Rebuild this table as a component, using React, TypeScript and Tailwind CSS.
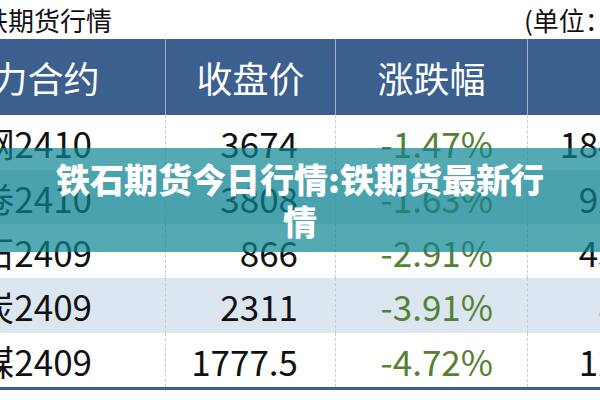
import React from "react";

const rows = [
  { code: "螺纹钢2410", price: "3674", chg: "-1.47%", vol: "184567", bg: "bg-white" },
  { code: "热卷2410", price: "3808", chg: "-1.63%", vol: "92345", bg: "bg-[#dce6f1]" },
  { code: "铁矿石2409", price: "866", chg: "-2.91%", vol: "45678", bg: "bg-white" },
  { code: "焦炭2409", price: "2311", chg: "-3.91%", vol: "8765", bg: "bg-[#dce6f1]" },
  { code: "焦煤2409", price: "1777.5", chg: "-4.72%", vol: "12345", bg: "bg-white" },
];

const heights = ["h-[55px]", "h-[54px]", "h-[54px]", "h-[55px]", "h-[54px]"];

export default function App() {
  const font = { fontFamily: '"Noto Sans CJK SC", "Noto Sans", sans-serif' };
  return (
    <div className="relative w-[600px] h-[400px] overflow-hidden bg-white" style={font}>
      {/* title row */}
      <div className="h-[39px] flex items-center justify-between">
        <div className="ml-[-18px] text-[26px] leading-none text-[#111]">铁期货行情</div>
        <div className="w-[76px] whitespace-nowrap text-[26px] leading-none text-[#111]">(单位：元/吨)</div>
      </div>

      {/* table */}
      <div className="ml-[-110px] w-[837px]">
        <div className="grid grid-cols-[275px_170px_192px_200px] h-[76px] bg-[#3b5f8e] text-white text-[36px] leading-none">
          <div className="flex items-center justify-center">主力合约</div>
          <div className="flex items-center justify-center border-l border-[#9fb4cf]">收盘价</div>
          <div className="flex items-center justify-center border-l border-[#9fb4cf]">涨跌幅</div>
          <div className="flex items-center pl-[92px] border-l border-[#9fb4cf] whitespace-nowrap">持仓量</div>
        </div>
        {rows.map((r, i) => (
          <div
            key={r.code}
            className={`grid grid-cols-[275px_170px_192px_200px] ${heights[i]} ${r.bg} text-[35px] leading-none text-[#111]`}
          >
            <div className="flex items-center justify-end pr-[73px] whitespace-nowrap">{r.code}</div>
            <div className="flex items-center justify-end pr-[37px] border-l border-dashed border-[#c9c9c9]">{r.price}</div>
            <div className="flex items-center justify-end pr-[34px] border-l border-dashed border-[#c9c9c9] text-[#548235]">{r.chg}</div>
            <div className="flex items-center justify-end pr-[51px] border-l border-dashed border-[#c9c9c9]">{r.vol}</div>
          </div>
        ))}
        <div className="h-[3px] bg-[#3b5f8e]" />
      </div>

      {/* overlay banner */}
      <div className="absolute left-0 top-[148px] w-[600px] h-[104px] bg-[rgba(12,133,145,0.7)] px-[50px] py-[10px]">
        <div className="text-center text-white font-black text-[34px] leading-[42px]">
          铁石期货今日行情:铁期货最新行情
        </div>
      </div>
    </div>
  );
}
